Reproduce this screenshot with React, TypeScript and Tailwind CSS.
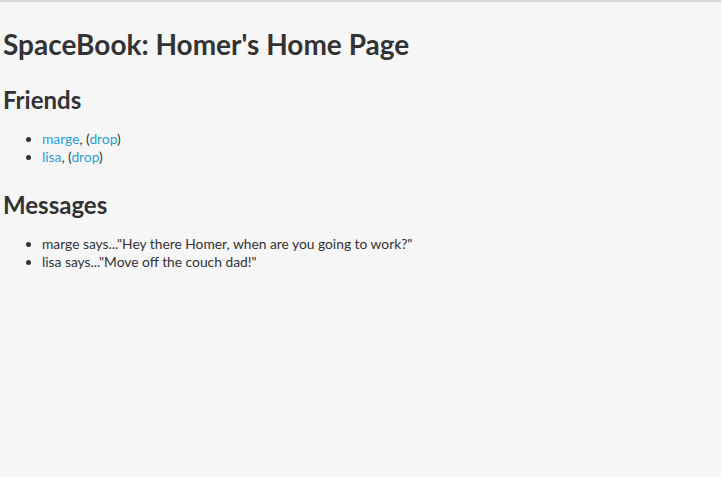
import React from 'react';

const friends = ['marge', 'lisa'];

const messages = [
  { from: 'marge', text: 'Hey there Homer, when are you going to work?' },
  { from: 'lisa', text: 'Move off the couch dad!' },
];

export default function App() {
  return (
    <div className="min-h-[479px] w-[724px] bg-white">
      <div
        className="h-[477px] w-[721px] border-t-2 border-[#dadada] bg-[#f6f6f6] px-[3px] text-[#333] text-[13.8px] leading-[18px]"
        style={{ fontFamily: 'Lato, "Open Sans", sans-serif' }}
      >
        <h1 className="mt-[24px] text-[28px] font-bold leading-[36px]">SpaceBook: Homer's Home Page</h1>

        <h2 className="mt-[23px] text-[24px] font-bold leading-[30px]">Friends</h2>
        <ul className="mt-[15px] list-disc pl-[39px]">
          {friends.map(f => (
            <li key={f}>
              <a href="#" className="text-[#2a9fd6]">{f}</a>, (<a href="#" className="text-[#2a9fd6]">drop</a>)
            </li>
          ))}
        </ul>

        <h2 className="mt-[24px] text-[24px] font-bold leading-[30px]">Messages</h2>
        <ul className="mt-[15px] list-disc pl-[39px]">
          {messages.map(m => (
            <li key={m.from}>
              {m.from} says..."{m.text}"
            </li>
          ))}
        </ul>
      </div>
    </div>
  );
}
